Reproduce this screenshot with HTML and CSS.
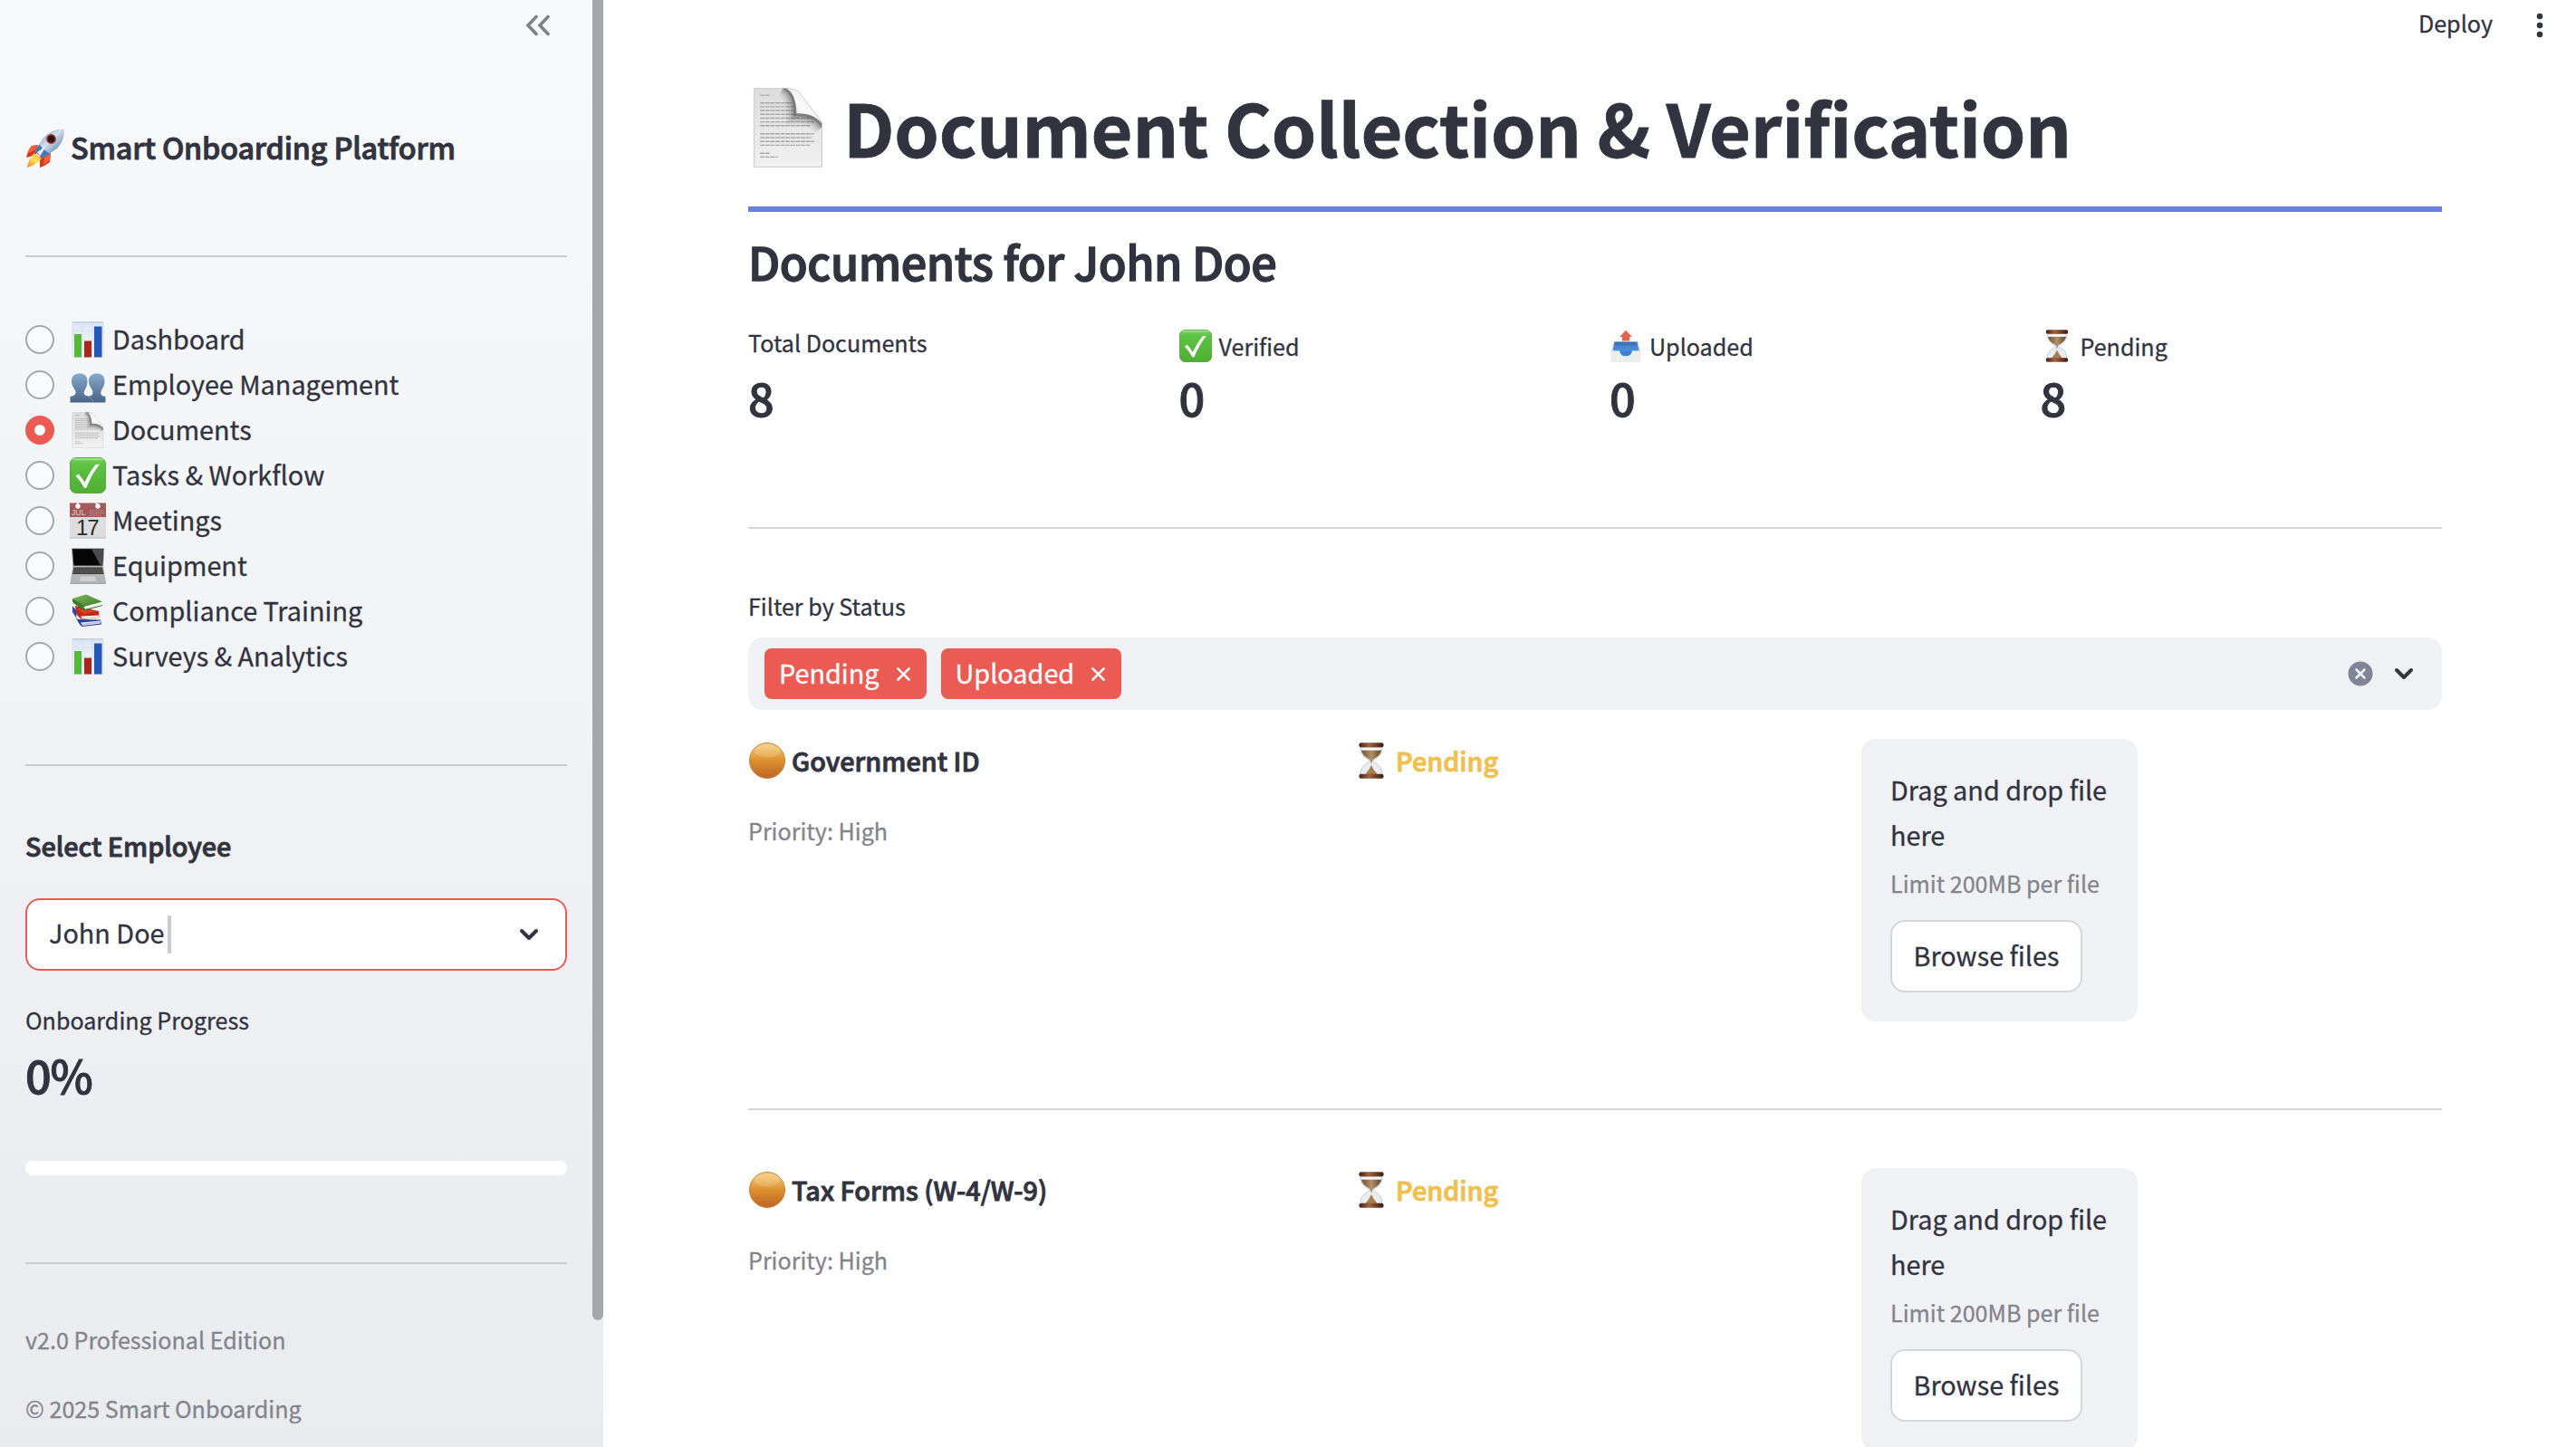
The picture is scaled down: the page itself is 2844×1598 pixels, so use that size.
FILE: index.html
```html
<!DOCTYPE html>
<html lang="en">
<head>
<meta charset="utf-8">
<title>Smart Onboarding Platform</title>
<link rel="stylesheet" href="styles.css">
</head>
<body>
<svg class="sprite" aria-hidden="true">
  <defs>
    <linearGradient id="gOrange" x1="0" y1="0" x2="0" y2="1"><stop offset="0" stop-color="#f3cd86"/><stop offset=".2" stop-color="#efb95f"/><stop offset=".5" stop-color="#dc8f2f"/><stop offset="1" stop-color="#bd6525"/></linearGradient>
    <linearGradient id="gGreen" x1="0" y1="0" x2="0" y2="1"><stop offset="0" stop-color="#7fd566"/><stop offset=".18" stop-color="#5dc342"/><stop offset="1" stop-color="#4fae33"/></linearGradient>
    <linearGradient id="gPeople" x1="0" y1="0" x2="0" y2="1"><stop offset="0" stop-color="#86a9cc"/><stop offset="1" stop-color="#496486"/></linearGradient>
    <linearGradient id="gPaper" x1="0" y1="0" x2="0" y2="1"><stop offset="0" stop-color="#dcdcdc"/><stop offset="1" stop-color="#f1f1f1"/></linearGradient>
    <linearGradient id="gCurl" x1="0" y1="1" x2="1" y2="0"><stop offset="0" stop-color="#d2d2d2"/><stop offset=".45" stop-color="#fafafa"/><stop offset="1" stop-color="#dcdcdc"/></linearGradient>
    <clipPath id="cPaper"><path d="M3 .3H20L25 1.500L37 17.500V39.700H3Z"/></clipPath>
    <linearGradient id="gChart" x1="0" y1="0" x2="0" y2="1"><stop offset="0" stop-color="#dbe6f2"/><stop offset="1" stop-color="#f6f9fc"/></linearGradient>
    <linearGradient id="gRocket" x1="0" y1="0" x2="1" y2="1"><stop offset="0" stop-color="#4f7fb8"/><stop offset=".45" stop-color="#d3e0ea"/><stop offset="1" stop-color="#2f5f9e"/></linearGradient>
    <linearGradient id="gFlame" x1="1" y1="0" x2="0" y2="1"><stop offset="0" stop-color="#f7a935"/><stop offset=".5" stop-color="#fbe45a"/><stop offset="1" stop-color="#ee7a2c"/></linearGradient>
    <linearGradient id="gWood" x1="0" y1="0" x2="1" y2="0"><stop offset="0" stop-color="#3f2016"/><stop offset=".4" stop-color="#a4623b"/><stop offset="1" stop-color="#3a1c12"/></linearGradient>
    <linearGradient id="gSand" x1="0" y1="0" x2="1" y2="0"><stop offset="0" stop-color="#6d5238"/><stop offset=".5" stop-color="#b39067"/><stop offset="1" stop-color="#5e4630"/></linearGradient>
    <linearGradient id="gTray" x1="0" y1="0" x2="0" y2="1"><stop offset="0" stop-color="#3f76b8"/><stop offset="1" stop-color="#4c92e6"/></linearGradient>
    <linearGradient id="gBook" x1="0" y1="0" x2="1" y2="1"><stop offset="0" stop-color="#7cb559"/><stop offset="1" stop-color="#3f7d2b"/></linearGradient>
  </defs>

  <symbol id="i-rocket" viewBox="0 0 44 44">
    <path d="M14 19L7 20Q3 25 1 33L12 30ZM28 28L27 38Q22 42 16 44L16 32Z" fill="#d93522"/>
    <path d="M14 19L7 20Q3 24 2 29L11 24ZM28 28L27 36L20 41L21 33Z" fill="#f0613a"/>
    <path d="M10 28Q4 33 2 44Q13 41 18 34Z" fill="url(#gFlame)"/>
    <path d="M42.500 1.500Q29 1 20 11L11 25Q13 31 20 33L35 23Q44 13 42.500 1.500Z" fill="url(#gRocket)"/>
    <path d="M11 25Q13 31 20 33L27 28.500Q20 25 15.500 18.500Z" fill="#4577b6"/>
    <path d="M13 27Q18 24 22 20Q20 27 16 31Z" fill="#e8eef2"/>
    <circle cx="28.500" cy="12.500" r="5.400" fill="#b02a20"/><circle cx="28.500" cy="12.500" r="3.700" fill="#16181d"/>
  </symbol>

  <symbol id="i-chart" viewBox="0 0 40 40">
    <path d="M3 .5H37V39.500H3Z" fill="url(#gChart)" stroke="#cfd9e3" stroke-width=".6"/>
    <path d="M3 10H37M3 20H37M3 30H37M14 .5V39.500M25 .5V39.500" stroke="#cbd9e8" stroke-width=".5"/>
    <path d="M3.500 1H36.500" stroke="#b9c4cf"/>
    <path d="M5 14H13V39.500H5Z" fill="#55b93a"/><path d="M16 21.500H24V39.500H16Z" fill="#b02419"/><path d="M27 5.500H35.500V39.500H27Z" fill="#2458b8"/>
  </symbol>

  <symbol id="i-people" viewBox="0 0 40 40">
    <path d="M19.500 16C19.500 9.500 15.500 7.500 11 7.500S2 9.500 2 16C2 21 4.500 23 6 26C7.300 29.500 6.500 32 .5 33V39.500H39.500V33C33.500 32 33.700 29.500 35 26C36.500 23 38.500 21 38.500 16C38.500 9.500 34.500 7.500 30 7.500S21 9.500 21 16C21 21 23.500 23 25 26C26 29.500 25.500 32 21 32.500C15.500 32 15 29.500 16.500 26C18 23 19.500 21 19.500 16Z" fill="url(#gPeople)"/>
    <path d="M19 32.500Q25 34 26 39.500" fill="none" stroke="#7d9abc" stroke-width=".8"/>
  </symbol>

  <symbol id="i-doc" viewBox="0 0 40 40">
    <path d="M3 .3H20L25 1.500L37 17.500V39.700H3Z" fill="url(#gPaper)" stroke="#d2d2d2" stroke-width=".6"/>
    <path d="M6 3.700H11M6 7.600H22M6 9.500H23M6 11.400H23M6 13.300H24M6 15.200H32M6 17.100H33M6 19H31M6 23.100H33M6 25H32M6 26.900H33M6 28.800H31M6 32.800H11M6 34.700H15" stroke="#a6a6a6" stroke-width=".65" stroke-dasharray="2.200 .35"/>
    <g clip-path="url(#cPaper)" fill="none" stroke="#222">
      <path d="M18 -1Q24 2 24.300 12.800Q33 12.500 38 19" stroke-width="11" opacity=".07"/>
      <path d="M18 -1Q24 2 24.300 12.800Q33 12.500 38 19" stroke-width="8" opacity=".1"/>
      <path d="M18 -1Q24 2 24.300 12.800Q33 12.500 38 19" stroke-width="5.500" opacity=".16"/>
      <path d="M18 -1Q24 2 24.300 12.800Q33 12.500 38 19" stroke-width="3" opacity=".3"/>
      <path d="M19 .3Q24 2.500 24.300 12.800Q33 12.500 37 18V0Z" fill="url(#gCurl)" stroke="none"/>
    </g>
  </symbol>

  <symbol id="i-check" viewBox="0 0 40 40">
    <rect x=".4" y=".4" width="39.200" height="39.200" rx="7" fill="url(#gGreen)" stroke="#3f9a29" stroke-width=".8"/>
    <path d="M4 2.200H36" stroke="#a5e294" stroke-width="1.400" stroke-linecap="round"/>
    <path d="M6.500 20.500L9.800 18.600Q13.500 23 16.500 27.800Q22 16 28.500 8L33 7.800Q24 19 18.200 34H16Q12 26 6.500 20.500Z" fill="#fff"/>
  </symbol>

  <symbol id="i-laptop" viewBox="0 0 40 40">
    <path d="M2 .5H38L37 20.500H3.500Z" fill="#888"/><path d="M3 1.300H37L36 19.500H4.500Z" fill="#060606"/><path d="M24 1.300H37L36 19.500H34Z" fill="#4b4b4b"/>
    <path d="M3.500 20.500H37L40 38.500H.5Z" fill="#b4b4b4"/><path d="M4.300 21.500H36L37.500 29H3Z" fill="#3a3a3a"/>
    <path d="M4 23.300H37M3.600 25.300H37.200M3.300 27.200H37.500" stroke="#999" stroke-width=".6" stroke-dasharray="1.800 .6"/>
    <path d="M12 31.500H28L29 37H11Z" fill="#cfcfcf"/><path d="M.5 38.500H40V39.800H.5Z" fill="#8c8c8c"/>
  </symbol>

  <symbol id="i-books" viewBox="0 0 40 40">
    <path d="M6 26L9 29L34 29.500L35 34.500L14 37Q12 36.500 10 33Z" fill="#253f9a"/><path d="M12 32.500L34 30.500V33.500L14 36Z" fill="#e4e6ee"/><path d="M13 34.500L34 32" stroke="#8690b5" stroke-width=".6"/>
    <path d="M3 14L8 20L7 27L3 21Z" fill="#2a4ab0"/>
    <path d="M6 14L32 20L32.500 27L14 29Q10 28 7 22Z" fill="#c2271b"/><path d="M12 25.500L32 24.500V27L14 28.500Z" fill="#efeae8"/><path d="M8 17L30 20L15 23Z" fill="#df3e2b"/>
    <path d="M3 6L18 1.500L36 9.500L16 15.500Z" fill="url(#gBook)"/><path d="M3 6Q2.500 9 4 11L16 19.500L36 14V13L17 17.500Q14.500 16 16 14Z" fill="#3c7a28"/><path d="M17 14.500L35.500 10V13L17 17.700Q15.500 16 17 14.500Z" fill="#f3f3ee"/>
  </symbol>

  <symbol id="i-outbox" viewBox="0 0 40 40">
    <path d="M20 .8L27.500 9H24.500V14H15.500V9H12.500Z" fill="#e9604f"/>
    <path d="M5.500 15H34.500L36.500 27H3.500Z" fill="url(#gTray)"/><path d="M5.500 15H34.500L34.700 19H5.200Z" fill="#3c6ba6" opacity=".55"/>
    <path d="M5.500 15L2.800 27M34.500 15L37.200 27" stroke="#d5dade" stroke-width="1.600"/>
    <path d="M2.500 26H12Q13.500 33 20 33T28 26H37.500V38Q37.500 39.500 36 39.500H4Q2.500 39.500 2.500 38Z" fill="#edede9" stroke="#d8d8d4" stroke-width=".5"/>
    <path d="M12.300 26H27.700Q26.500 32.500 20 32.500T12.300 26Z" fill="#3f80d4"/>
  </symbol>

  <symbol id="i-hourglass" viewBox="0 0 40 40">
    <path d="M8 5Q7 14 17.500 19.500Q18.300 20.500 17.500 21.500Q7.500 26 8 35.500H32Q32.500 26 22.500 21.500Q21.700 20.500 22.500 19.500Q33 14 32 5Z" fill="#e9edf2" stroke="#b8bfc7" stroke-width=".8"/>
    <path d="M9 8.500H31Q30.500 14 22 18.700Q21 19.500 20 24Q19 19.500 18 18.700Q9.500 14 9 8.500Z" fill="url(#gSand)"/><path d="M9.500 7.500H30.500" stroke="#fff" stroke-width="1.600"/>
    <path d="M20 25Q22 30 27 35.500H13Q18 30 20 25Z" fill="#a5804e"/>
    <rect x="6.500" y=".3" width="27" height="5" rx="2" fill="url(#gWood)"/><rect x="6.500" y="34.700" width="27" height="5" rx="2" fill="url(#gWood)"/>
  </symbol>

  <symbol id="i-circle" viewBox="0 0 40 40">
    <circle cx="20" cy="20" r="19.500" fill="url(#gOrange)" stroke="#c98534" stroke-width="1"/>
    <ellipse cx="20" cy="9.500" rx="14" ry="7" fill="#fff" opacity=".14"/>
  </symbol>

  <symbol id="i-chevron" viewBox="0 0 22 14"><path d="M3 3L11 11L19 3" fill="none" stroke="#31333f" stroke-width="4" stroke-linecap="round" stroke-linejoin="round"/></symbol>
</svg>

<div class="app">
  <aside class="sidebar">
    <div class="sidebar-content">
      <div class="collapse">
        <svg width="28" height="24" viewBox="0 0 28 24"><path d="M12 2.500L3 12L12 21.500M25 2.500L16 12L25 21.500" fill="none" stroke="#808189" stroke-width="3.600" stroke-linecap="round"/></svg>
      </div>
      <div class="brand"><svg class="icon"><use href="#i-rocket"/></svg><span>Smart Onboarding Platform</span></div>
      <hr class="rule rule-brand">
      <nav class="menu">
        <div class="option"><i class="radio"></i><svg class="icon"><use href="#i-chart"/></svg><span>Dashboard</span></div>
        <div class="option"><i class="radio"></i><svg class="icon"><use href="#i-people"/></svg><span>Employee Management</span></div>
        <div class="option"><i class="radio on"></i><svg class="icon"><use href="#i-doc"/></svg><span>Documents</span></div>
        <div class="option"><i class="radio"></i><svg class="icon"><use href="#i-check"/></svg><span>Tasks &amp; Workflow</span></div>
        <div class="option"><i class="radio"></i>
          <svg class="icon" viewBox="0 0 40 40">
            <path d="M0 .5H40V39.500H0Z" fill="#dedddd"/><path d="M0 .5H40V16H0Z" fill="#a35a5a"/><path d="M0 39H40" stroke="#bcbcbc"/>
            <circle cx="9" cy="4" r="2.700" fill="#fff"/><circle cx="31" cy="4" r="2.700" fill="#fff"/><path d="M9 0V3M28.500 0L31 3" stroke="#fff" stroke-width="1.400"/>
            <path d="M22 9H38M22 11.500H38M22 14H34" stroke="#d3adad" stroke-width="1" stroke-dasharray="1 1.200"/>
            <text x="2" y="13.700" class="cal-month">JUL</text><text x="7" y="36" class="cal-day">17</text>
          </svg>
          <span>Meetings</span></div>
        <div class="option"><i class="radio"></i><svg class="icon"><use href="#i-laptop"/></svg><span>Equipment</span></div>
        <div class="option"><i class="radio"></i><svg class="icon"><use href="#i-books"/></svg><span>Compliance Training</span></div>
        <div class="option"><i class="radio"></i><svg class="icon"><use href="#i-chart"/></svg><span>Surveys &amp; Analytics</span></div>
      </nav>
      <hr class="rule rule-menu">
      <div class="select-label">Select Employee</div>
      <div class="select"><span>John Doe</span><i class="caret"></i><svg class="chevron"><use href="#i-chevron"/></svg></div>
      <div class="label progress-label">Onboarding Progress</div>
      <div class="value">0%</div>
      <div class="progress"></div>
      <hr class="rule rule-progress">
      <div class="label muted version">v2.0 Professional Edition</div>
      <div class="label muted copyright">© 2025 Smart Onboarding</div>
    </div>
    <div class="scrollbar"></div>
  </aside>

  <main class="main">
    <header class="toolbar"><span class="label">Deploy</span><svg width="8" height="30" viewBox="0 0 8 30"><g fill="#31333f"><circle cx="4" cy="5" r="3.300"/><circle cx="4" cy="15" r="3.300"/><circle cx="4" cy="25" r="3.300"/></g></svg></header>
    <div class="content">
      <h1><svg class="icon"><use href="#i-doc"/></svg><span>Document Collection &amp; Verification</span></h1>
      <h2>Documents for John Doe</h2>
      <section class="metrics">
        <div class="metric"><div class="label">Total Documents</div><div class="value">8</div></div>
        <div class="metric with-icon"><div class="label"><svg class="icon"><use href="#i-check"/></svg><span>Verified</span></div><div class="value">0</div></div>
        <div class="metric with-icon"><div class="label"><svg class="icon"><use href="#i-outbox"/></svg><span>Uploaded</span></div><div class="value">0</div></div>
        <div class="metric with-icon"><div class="label"><svg class="icon"><use href="#i-hourglass"/></svg><span>Pending</span></div><div class="value">8</div></div>
      </section>
      <hr class="rule rule-metrics">
      <div class="label filter-label">Filter by Status</div>
      <div class="multiselect">
        <div class="tag"><span>Pending</span><svg class="x" viewBox="0 0 16 16"><path d="M1.500 1.500L14.500 14.500M14.500 1.500L1.500 14.500"/></svg></div>
        <div class="tag"><span>Uploaded</span><svg class="x" viewBox="0 0 16 16"><path d="M1.500 1.500L14.500 14.500M14.500 1.500L1.500 14.500"/></svg></div>
        <svg class="clear" viewBox="0 0 28 28"><circle cx="14" cy="14" r="13.500" fill="#808495"/><path d="M9.500 9.500L18.500 18.500M18.500 9.500L9.500 18.500" stroke="#f0f1f5" stroke-width="2.600" stroke-linecap="round"/></svg>
        <svg class="chevron"><use href="#i-chevron"/></svg>
      </div>
      <article class="document">
        <div><div class="name"><svg class="icon"><use href="#i-circle"/></svg><span>Government ID</span></div><div class="label muted">Priority: High</div></div>
        <div class="name status"><svg class="icon"><use href="#i-hourglass"/></svg><span>Pending</span></div>
        <div class="upload"><p>Drag and drop file here</p><div class="label muted">Limit 200MB per file</div><button>Browse files</button></div>
      </article>
      <hr class="rule rule-document">
      <article class="document">
        <div><div class="name"><svg class="icon"><use href="#i-circle"/></svg><span>Tax Forms (W-4/W-9)</span></div><div class="label muted">Priority: High</div></div>
        <div class="name status"><svg class="icon"><use href="#i-hourglass"/></svg><span>Pending</span></div>
        <div class="upload"><p>Drag and drop file here</p><div class="label muted">Limit 200MB per file</div><button>Browse files</button></div>
      </article>
    </div>
  </main>
</div>
</body>
</html>
```
FILE: styles.css
```css
* { box-sizing: border-box; }
body {
  margin: 0;
  overflow: hidden;
  background: #fff;
  color: #31333f;
  font-family: "Noto Sans CJK SC", sans-serif;
  font-size: 28.8px;
  line-height: 50px;
  -webkit-text-stroke: .3px;
}
.sprite { position: absolute; width: 0; height: 0; }
.cal-month { font: 8.5px "Liberation Sans", sans-serif; fill: #e6caca; }
.cal-day { font: 24px "Liberation Sans", sans-serif; fill: #2c2c2c; letter-spacing: -1px; }

.app { display: flex; width: 2844px; height: 1598px; overflow: hidden; }
.icon { display: block; flex: none; width: 40px; height: 40px; }
.rule { height: 2px; margin: 0; border: 0; background: #d6d6d9; }
.label { font-size: 25.1px; line-height: 42px; white-space: nowrap; }
.muted { color: #83848c; }
.value { font-size: 50.4px; line-height: 68px; font-weight: 500; letter-spacing: -.6px; -webkit-text-stroke: 1px; }
.chevron { display: block; width: 22px; height: 14px; }

/* Sidebar */
.sidebar {
  display: flex;
  flex: none;
  width: 666px;
  background: linear-gradient(180deg, #f8f9fa 0%, #e9ebef 100%);
}
.sidebar-content { display: flex; flex-direction: column; width: 654px; padding: 0 28px; }
.sidebar .rule { background: #cbccd0; flex: none; }
.scrollbar { width: 12px; height: 1458px; background: #a6a6ad; border-radius: 0 0 6px 6px; }
.collapse { display: flex; justify-content: flex-end; padding: 16px 18px 0 0; height: 141px; }
.brand {
  display: flex; align-items: center; gap: 6px; height: 44px;
  font-size: 32.4px; line-height: 44px; font-weight: 500; white-space: nowrap;
  letter-spacing: -.22px; -webkit-text-stroke: .9px;
}
.brand .icon { width: 44px; height: 44px; }
.brand span { margin-top: -2px; }
.rule-brand { margin-top: 97px; }
.menu { margin-top: 66px; }
.option { display: flex; align-items: center; height: 50px; white-space: nowrap; }
.option .icon { margin: 0 7px 0 17px; }
.option span { padding-bottom: 3px; }
.radio { width: 32px; height: 32px; border: 2px solid #a6a7ad; border-radius: 50%; background: #f9fafc; }
.radio.on { border: 10px solid #ec5b53; }
.rule-menu { margin-top: 94px; }
.select-label {
  margin-top: 64px; height: 47px; line-height: 48px; font-weight: 500;
  letter-spacing: -.05px; -webkit-text-stroke: .9px;
}
.select {
  display: flex; align-items: center; height: 80px; margin-top: 35px; padding: 0 22px 0 24px;
  border: 2px solid #ec5b53; border-radius: 16px; background: #fff; white-space: nowrap;
}
.select span { padding-bottom: 4px; }
.caret { width: 4px; height: 42px; margin-left: 3px; background: #cbccd0; border-radius: 1px; }
.select .chevron { margin: 0 7px 0 auto; }
.progress-label { margin-top: 33px; }
.sidebar .value { margin-top: 6px; height: 67px; letter-spacing: -1.2px; }
.progress { height: 16px; margin-top: 62px; background: #fff; border-radius: 8px; flex: none; }
.rule-progress { margin-top: 96px; }
.version { margin-top: 62px; }
.copyright { margin-top: 34px; }

/* Main */
.main { display: flex; flex-direction: column; width: 2178px; }
.toolbar { display: flex; flex: none; justify-content: flex-end; gap: 48px; height: 86px; padding: 4px 36px 0 0; }
.toolbar svg { margin-top: 9px; }
.content { width: 2030px; padding-left: 160px; }
h1 {
  display: flex; align-items: center; gap: 17px; height: 148px; margin: 0; padding-bottom: 34px;
  border-bottom: 6px solid #6c7ee1; font-size: 79.2px; line-height: 106px; font-weight: 700;
  letter-spacing: -.2px; white-space: nowrap; -webkit-text-stroke: .8px;
}
h1 .icon { width: 88px; height: 88px; margin-top: 1px; }
h2 {
  height: 67px; margin: 21px 0 0; font-size: 50.4px; line-height: 68px; font-weight: 500;
  letter-spacing: -.45px; -webkit-text-stroke: 1.4px;
}
.metrics { display: grid; grid-template-columns: repeat(4, 1fr); column-gap: 32px; height: 225px; padding-top: 35px; }
.metric .value { margin-top: 6px; }
.with-icon .label { display: flex; align-items: center; gap: 8px; margin-top: 4px; }
.with-icon .value { margin-top: 2px; }
.metric .icon { width: 36px; height: 36px; }
.rule-metrics { margin-top: 35px; }
.rule-metrics, .rule-document { width: 100%; }
.filter-label { margin-top: 64px; }
.multiselect {
  display: flex; align-items: center; gap: 16px; height: 80px; margin-top: 14px; padding: 0 31px 0 18px;
  border-radius: 16px; background: #f0f1f5;
}
.tag {
  display: flex; align-items: center; height: 56px; padding: 0 18px 0 16px; border-radius: 8px;
  background: #ec5b53; color: #fff; white-space: nowrap;
}
.tag span { padding-bottom: 3px; }
.x { width: 15px; height: 15px; margin-left: 19px; fill: none; stroke: #fff; stroke-width: 2.8; stroke-linecap: round; }
.clear { width: 28px; height: 28px; margin-left: auto; }
.multiselect .chevron { margin-left: 7px; }
.document { display: grid; grid-template-columns: 636px 529px 305px; column-gap: 32px; margin-top: 32px; height: 312px; }
.name {
  display: flex; align-items: center; gap: 7px; height: 40px; margin-top: 4px; line-height: 40px;
  font-weight: 500; white-space: nowrap; -webkit-text-stroke: .9px;
}
.name:not(.status) .icon { margin-left: 1px; }
.name + .muted { margin-top: 36px; }
.status { color: #f0bf4c; }
.upload { padding: 31px 18px 0 32px; border-radius: 16px; background: #f0f1f5; }
.upload p { margin: 0; }
.upload .label { margin-top: 7px; }
button {
  display: block; width: 212px; height: 80px; margin-top: 20px; padding: 0 0 2px; border: 2px solid #d5d6d9;
  border-radius: 16px; background: #fff; color: inherit; font: inherit; white-space: nowrap;
}
.rule-document { margin-top: 96px; }
.rule-document + .document { margin-top: 64px; }
```
